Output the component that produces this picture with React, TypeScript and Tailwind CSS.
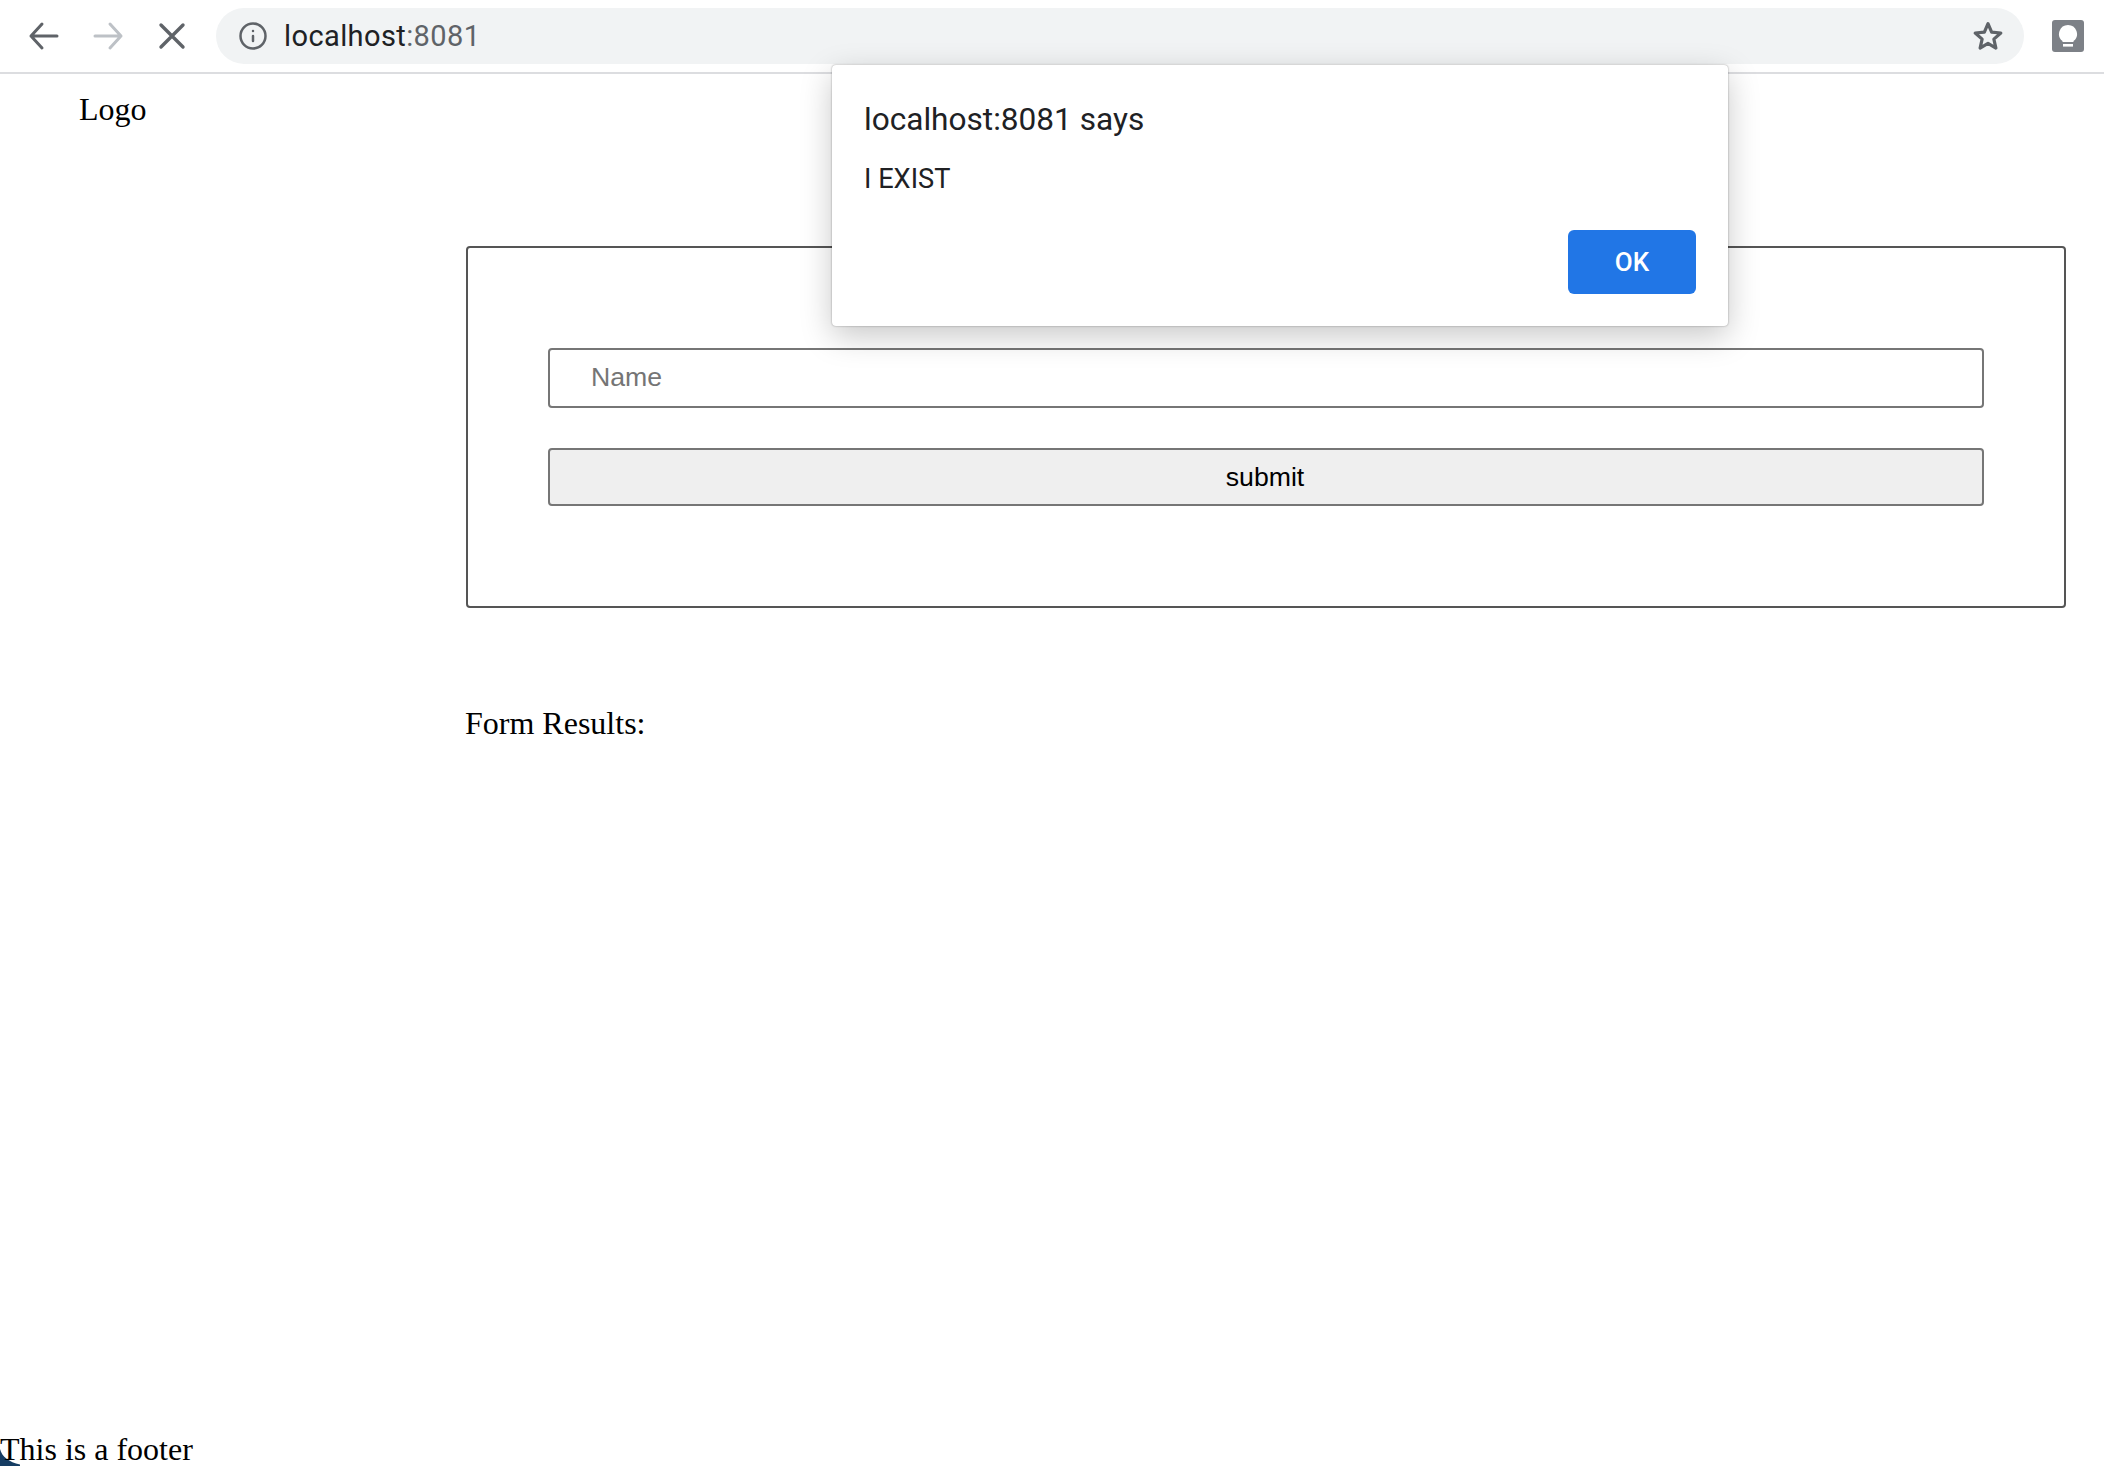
import { Info } from 'lucide-react';

const uiFont = "font-['Roboto','Liberation_Sans',sans-serif]";

function Toolbar() {
  return (
    <header className="relative flex h-[74px] shrink-0 items-start border-b-2 border-[#dcdde0] bg-white">
      <div className="flex h-[72px] w-[216px] shrink-0 items-center pl-[22px] gap-[20px]">
        <svg width="44" height="44" viewBox="0 0 44 44" fill="none" stroke="#5f6368" strokeWidth="3" strokeLinecap="round" strokeLinejoin="round">
          <path d="M9 22h26M20 10 9 22l11 12" />
        </svg>
        <svg width="44" height="44" viewBox="0 0 44 44" fill="none" stroke="#bdc1c6" strokeWidth="3" strokeLinecap="round" strokeLinejoin="round">
          <path d="M9 22h26M24 10l11 12-11 12" />
        </svg>
        <svg width="44" height="44" viewBox="0 0 44 44" fill="none" stroke="#5f6368" strokeWidth="3.4" strokeLinecap="round">
          <path d="M11 11l22 22M33 11 11 33" />
        </svg>
      </div>
      <div className={`mt-[8px] flex h-[56px] w-[1808px] shrink-0 items-center justify-between rounded-full bg-[#f1f3f4] pl-[22px] pr-[20px] ${uiFont}`}>
        <div className="flex items-center gap-[16px]">
          <Info size={30} color="#5f6368" strokeWidth={2} />
          <span className="text-[29px] leading-none tracking-[0.4px] text-[#202124]">
            localhost<span className="text-[#5f6368]">:8081</span>
          </span>
        </div>
        <svg width="32" height="32" viewBox="0 0 30 30" fill="none" stroke="#5f6368" strokeWidth="3" strokeLinejoin="round">
          <path d="M15 3.5l3.4 7.9 8.6.8-6.5 5.700 1.900 8.400L15 21.900l-7.400 4.400 1.900-8.400L3 12.200l8.600-.8z" />
        </svg>
      </div>
      <div className="ml-[28px] mt-[20px] flex h-[32px] w-[32px] items-center justify-center rounded-[3px] bg-[#7d8187]">
        <svg width="20" height="24" viewBox="0 0 20 24" fill="white">
          <path d="M10 1a9 9 0 0 1 5.500 16.100V18h-11v-.9A9 9 0 0 1 10 1z" />
          <rect x="5" y="20" width="10" height="2.600" />
        </svg>
      </div>
    </header>
  );
}

function AlertDialog() {
  return (
    <div className={`absolute left-[832px] top-[65px] h-[261px] w-[896px] rounded-[4px] bg-white pl-[32px] pr-[32px] pt-[33px] shadow-[0_0_2px_rgba(0,0,0,0.4),0_10px_32px_rgba(0,0,0,0.22)] ${uiFont}`}>
      <div className="text-[31.6px] leading-[44px] text-[#202124]">localhost:8081 says</div>
      <div className="mt-[18px] text-[27.2px] leading-[38px] text-[#202124]">I EXIST</div>
      <div className="mt-[32px] flex justify-end">
        <button className="flex h-[64px] w-[128px] items-center justify-center rounded-[6px] bg-[#2176e6] text-[26px] font-medium text-white">OK</button>
      </div>
    </div>
  );
}

export default function App() {
  return (
    <div className="relative flex h-[1466px] flex-col overflow-hidden bg-white font-['Liberation_Serif',serif] text-[32px] text-black">
      <Toolbar />
      <div className="flex flex-1">
        <div className="w-[466px] shrink-0 pl-[79px] pt-[17px]">
          <div className="leading-[37px]">Logo</div>
        </div>
        <main className="flex-1 pt-[172px]">
          <form className="h-[362px] w-[1600px] rounded-[4px] border-2 border-[#555] px-[80px] pt-[100px]">
            <input
              placeholder="Name"
              className="block h-[60px] w-[1436px] rounded-[4px] border-2 border-[#767676] bg-white pb-[2px] pl-[41px] font-['Liberation_Sans',sans-serif] text-[26.67px] outline-none placeholder:text-[#757575]"
            />
            <button type="button" className="mt-[40px] block h-[58px] w-[1436px] rounded-[4px] border-2 border-[#767676] bg-[#efefef] pr-[2px] font-['Liberation_Sans',sans-serif] text-[26.67px] text-black">
              submit
            </button>
          </form>
          <div className="-ml-[1px] mt-[97px] leading-[37px]">Form Results:</div>
        </main>
      </div>
      <footer className="relative h-[33px] leading-[32px]">
        <svg className="absolute bottom-0 left-0" width="22" height="17" viewBox="0 0 22 17">
          <path d="M0 0c2 8 9 13 20 15.500v1.500H0z" fill="#163d63" />
        </svg>
        <span className="relative">This is a footer</span>
      </footer>
      <AlertDialog />
    </div>
  );
}
